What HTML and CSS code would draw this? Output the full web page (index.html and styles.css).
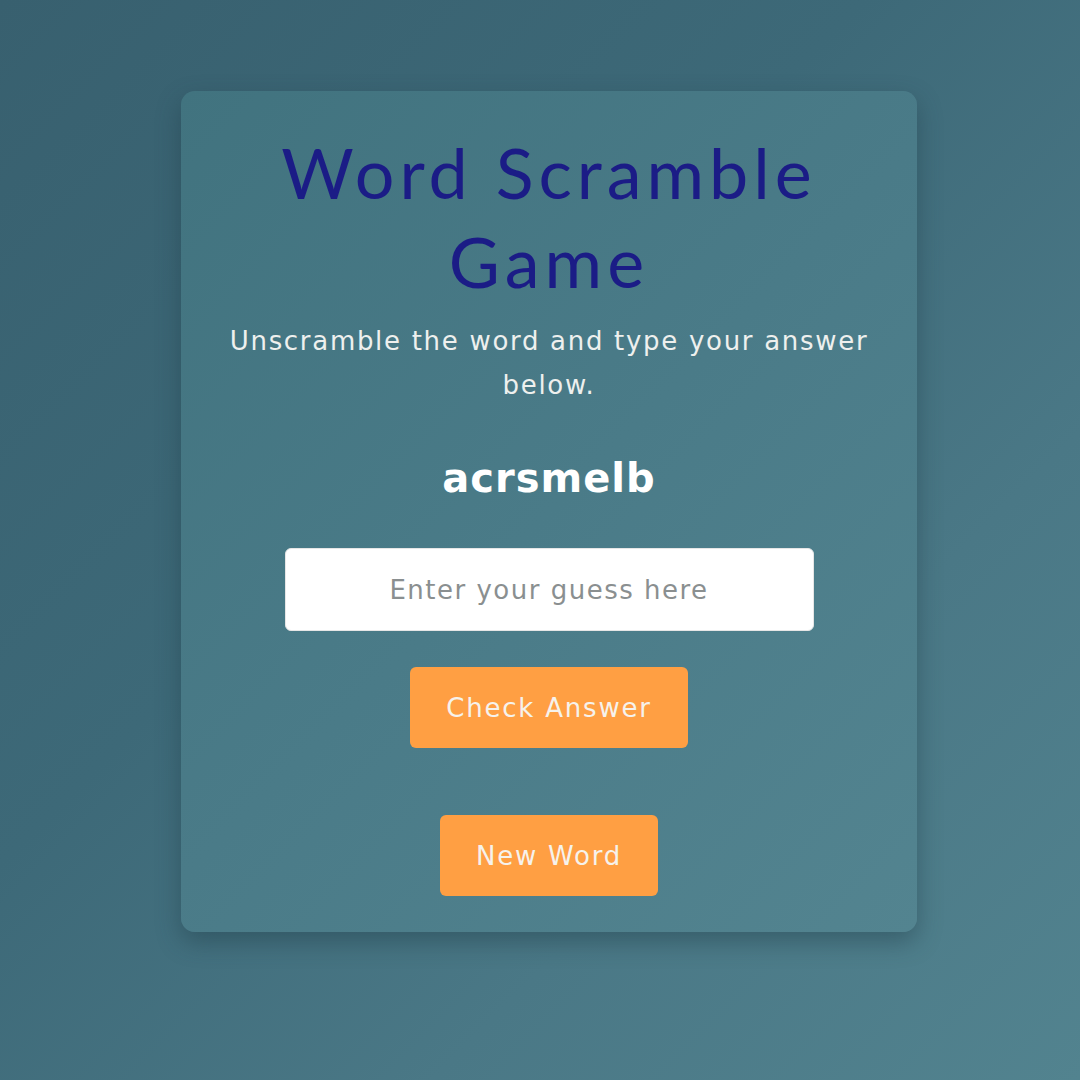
FILE: index.html
```html
<!DOCTYPE html>
<html>
<head>
	<link rel="stylesheet" href="styles.css">
</head>
<body>

	<div class="game">
		<h1 class="title">Word Scramble Game</h1>
		<p class="hint">Unscramble the word and type your answer below.</p>

		<div class="scrambled" id="scrambled">acrsmelb</div>

		<input type="text" id="txt_guess" class="guess" placeholder="Enter your guess here">

		<div class="actions">
			<button id="btn_check" class="btn">Check Answer</button>
			<button id="btn_new" class="btn">New Word</button>
		</div>
	</div>

</body>
</html>
```

FILE: styles.css
```css
html {
  height: 100%;
}

body {
  margin: 0;
  min-height: 100%;
  font-family: "DejaVu Sans", Arial, sans-serif;
  background: linear-gradient(135deg, #38606f 0%, #3d6978 40%, #4a7886 70%, #52838f 100%);
  display: flex;
  justify-content: center;
  align-items: flex-start;
  padding: 91px 0 0 18px;
  box-sizing: border-box;
}

.game {
  width: 736px;
  box-sizing: border-box;
  padding: 37px 36px 36px;
  border-radius: 14px;
  background: linear-gradient(135deg, #41737f 0%, #4a7b88 50%, #538490 100%);
  box-shadow: 0 10px 24px rgba(30, 60, 72, 0.45);
  text-align: center;
}

.title {
  margin: 0;
  font-family: Lato, "Open Sans", sans-serif;
  font-weight: 400;
  font-size: 70px;
  letter-spacing: 5px;
  line-height: 89px;
  color: #1b1c86;
}

.hint {
  margin: 13px 0 0;
  font-size: 26px;
  letter-spacing: 1.7px;
  line-height: 44px;
  color: #eef0ee;
}

.scrambled {
  margin-top: 49px;
  font-size: 40px;
  line-height: 44px;
  font-weight: 700;
  letter-spacing: 1px;
  color: #ffffff;
}

.guess {
  display: block;
  width: 529px;
  height: 83px;
  margin: 48px auto 0;
  box-sizing: border-box;
  border: 1px solid #e6e6e6;
  border-radius: 6px;
  background: #ffffff;
  font-family: "DejaVu Sans", Arial, sans-serif;
  font-size: 26px;
  letter-spacing: 1.5px;
  text-align: center;
  color: #333;
}

.guess::placeholder {
  color: #8a8f90;
}

.actions {
  display: flex;
  flex-direction: column;
  align-items: center;
  gap: 67px;
  margin-top: 36px;
}

.btn {
  height: 81px;
  padding: 0 36px;
  border: none;
  border-radius: 6px;
  background-color: #ff9f43;
  color: #f6f2ec;
  font-family: "DejaVu Sans", Arial, sans-serif;
  font-size: 26px;
  letter-spacing: 1.8px;
  cursor: pointer;
}
```
